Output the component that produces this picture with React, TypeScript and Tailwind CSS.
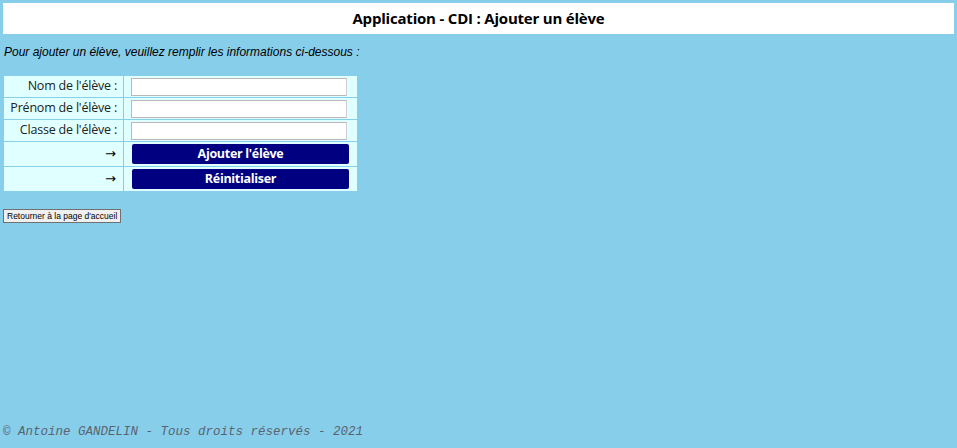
import React from 'react';

const fields = ["Nom de l'élève :", "Prénom de l'élève :", "Classe de l'élève :"];
const actions = ["Ajouter l'élève", 'Réinitialiser'];

const App = () => {
  return (
    <div className="w-[957px] h-[448px] bg-[#87CEEB] flex flex-col px-[3px] pt-[3px] overflow-hidden">
      {/* Header */}
      <div className="h-[31px] bg-white flex items-center justify-center">
        <h1 className="font-['Open_Sans',sans-serif] font-bold text-[15px] text-black tracking-[-0.2px]">
          Application - CDI : Ajouter un élève
        </h1>
      </div>

      <p className="mt-[11px] font-['Liberation_Sans',sans-serif] italic text-[12px] text-black leading-[14px] pl-px">
        Pour ajouter un élève, veuillez remplir les informations ci-dessous :
      </p>

      {/* Form table */}
      <div className="mt-[16px] w-[354px] grid grid-cols-[119px_233px] gap-px p-px bg-[#87CEEB] font-['Open_Sans',sans-serif] text-[12.5px] text-[#222]">
        {fields.map((label) => (
          <React.Fragment key={label}>
            <div className="h-[21px] bg-[#E0FFFF] flex items-center justify-end pr-[6px] whitespace-nowrap tracking-[-0.2px]">
              {label}
            </div>
            <div className="h-[21px] bg-[#E0FFFF] flex items-center pl-[7px]">
              <input
                type="text"
                className="w-[216px] h-[18px] bg-white border border-[#b8b8b8] border-r-[#d0d0d0] outline-none"
              />
            </div>
          </React.Fragment>
        ))}
        {actions.map((label) => (
          <React.Fragment key={label}>
            <div className="h-[24px] bg-[#E0FFFF] flex items-center justify-end pr-[7px] font-['DejaVu_Sans',sans-serif] text-[13px] text-black">
              →
            </div>
            <div className="h-[24px] bg-[#E0FFFF] flex items-center pl-[8px]">
              <button className="w-[217px] h-[20px] bg-[#000080] rounded-[2px] text-white font-bold text-[12.5px] tracking-[-0.3px] leading-none flex items-center justify-center">
                {label}
              </button>
            </div>
          </React.Fragment>
        ))}
      </div>

      <div className="mt-[17px] flex">
        <button className="h-[14px] px-[3px] bg-[#f0f0f0] border border-[#707070] font-['Liberation_Sans',sans-serif] text-[8.5px] leading-none text-black">
          Retourner à la page d'accueil
        </button>
      </div>

      <div className="mt-auto mb-[9px] font-['Liberation_Mono',monospace] italic text-[12.5px] text-[#5a6470] leading-[14px]">
        © Antoine GANDELIN - Tous droits réservés - 2021
      </div>
    </div>
  );
};

export default App;
